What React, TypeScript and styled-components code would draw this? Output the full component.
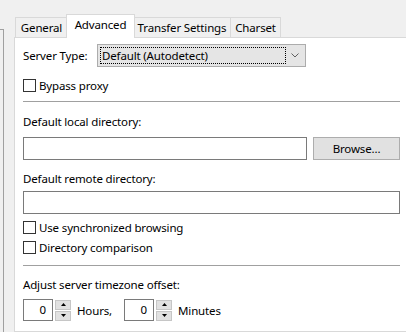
import styled, { createGlobalStyle } from "styled-components";

const GlobalStyle = createGlobalStyle`
  html, body {
    margin: 0;
    padding: 0;
    background: #f0f0f0;
  }
  body {
    font-family: "Noto Sans", "Liberation Sans", sans-serif;
    font-size: 11.5px;
    letter-spacing: -0.15px;
    color: #000;
  }
`;

const Window = styled.div`
  display: flex;
  width: 406px;
  height: 332px;
  overflow: hidden;
  background: #f0f0f0;
`;

// corner of the site tree that sits left of the tabs
const TreeEdge = styled.div`
  flex: none;
  width: 3px;
  margin-top: 29px;
  margin-right: 10px;
  border-top: 1px solid #a0a0a0;
  border-right: 1px solid #a0a0a0;
`;

const TabArea = styled.div`
  flex: none;
  display: flex;
  flex-direction: column;
  width: 420px;
  padding-top: 14px;
`;

const TabStrip = styled.div`
  display: flex;
  align-items: flex-end;
  height: 23px;
  padding-left: 1px;
  position: relative;
  z-index: 1;
`;

const Tab = styled.div<{ $active?: boolean; $w: number }>`
  box-sizing: border-box;
  width: ${(p) => p.$w}px;
  height: ${(p) => (p.$active ? 24 : 20)}px;
  margin-left: ${(p) => (p.$active ? -2 : -1)}px;
  margin-right: ${(p) => (p.$active ? -1 : 0)}px;
  margin-bottom: ${(p) => (p.$active ? -1 : 0)}px;
  border: 1px solid #d9d9d9;
  border-bottom: none;
  background: ${(p) => (p.$active ? "#fff" : "#f0f0f0")};
  position: relative;
  z-index: ${(p) => (p.$active ? 2 : 1)};
  text-align: center;
  line-height: ${(p) => (p.$active ? 20 : 19)}px;
  white-space: nowrap;

  &:first-child {
    margin-left: 0;
  }
`;

const Panel = styled.div`
  flex: 1;
  border: 1px solid #d9d9d9;
  background: #fff;
  padding: 0 8px;
`;

const Content = styled.div`
  width: 377px;
  display: flex;
  flex-direction: column;
`;

const Row = styled.div<{ $mt: number }>`
  display: flex;
  align-items: center;
  margin-top: ${(p) => p.$mt}px;
`;

const Label = styled.div<{ $mt: number }>`
  margin-top: ${(p) => p.$mt}px;
  height: 16px;
  line-height: 16px;
  white-space: nowrap;
`;

const FieldLabel = styled.span<{ $w?: number }>`
  width: ${(p) => (p.$w ? `${p.$w}px` : "auto")};
  flex: none;
  white-space: nowrap;
  line-height: 16px;
`;

const Combo = styled.div`
  box-sizing: border-box;
  width: 209px;
  height: 23px;
  border: 1px solid #acacac;
  background: #e5e5e5;
  display: flex;
  align-items: center;
  padding: 2px;
`;

const ComboText = styled.div`
  box-sizing: border-box;
  flex: 1;
  height: 17px;
  border: 1px dotted #000;
  line-height: 15px;
  padding-left: 1px;
  white-space: nowrap;
`;

const ComboArrow = styled.div`
  width: 17px;
  display: flex;
  justify-content: center;
`;

const CheckRow = styled.label<{ $mt: number }>`
  display: flex;
  align-items: center;
  height: 17px;
  margin-top: ${(p) => p.$mt}px;
  gap: 3px;
`;

const CheckBox = styled.span`
  box-sizing: border-box;
  width: 13px;
  height: 13px;
  border: 1px solid #333;
  background: #fff;
  flex: none;
`;

const Separator = styled.hr<{ $mt: number }>`
  margin: ${(p) => p.$mt}px 0 0;
  border: none;
  height: 1px;
  background: #a0a0a0;
`;

const TextInput = styled.div<{ $w: number }>`
  box-sizing: border-box;
  width: ${(p) => p.$w}px;
  height: 23px;
  border: 1px solid #7a7a7a;
  background: #fff;
`;

const Button = styled.div`
  box-sizing: border-box;
  width: 87px;
  height: 23px;
  margin-left: auto;
  border: 1px solid #adadad;
  background: #e1e1e1;
  display: flex;
  align-items: center;
  justify-content: center;
`;

const SpinGroup = styled.div`
  display: flex;
  align-items: center;
  gap: 2px;
`;

const SpinInput = styled.div`
  box-sizing: border-box;
  width: 30px;
  height: 22px;
  border: 1px solid #7a7a7a;
  background: #fff;
  text-align: right;
  padding-right: 6px;
  line-height: 20px;
`;

const SpinButtons = styled.div`
  display: flex;
  flex-direction: column;
  gap: 1px;
`;

const SpinButton = styled.div`
  box-sizing: border-box;
  width: 16px;
  height: 10px;
  border: 1px solid #c6c6c6;
  background: #e1e1e1;
  display: flex;
  align-items: center;
  justify-content: center;
`;

const UnitLabel = styled.span<{ $mr: number }>`
  margin-left: 6px;
  margin-right: ${(p) => p.$mr}px;
  white-space: nowrap;
`;

const Triangle = ({ down }: { down?: boolean }) => (
  <svg width="5" height="3" viewBox="0 0 5 3">
    <path d={down ? "M0 0H5L2.5 3Z" : "M0 3H5L2.5 0Z"} fill="#000" />
  </svg>
);

function Spinner({ value, unit, gapAfter }: { value: string; unit: string; gapAfter: number }) {
  return (
    <>
      <SpinGroup>
        <SpinInput>{value}</SpinInput>
        <SpinButtons>
          <SpinButton>
            <Triangle />
          </SpinButton>
          <SpinButton>
            <Triangle down />
          </SpinButton>
        </SpinButtons>
      </SpinGroup>
      <UnitLabel $mr={gapAfter}>{unit}</UnitLabel>
    </>
  );
}

const tabs = [
  { name: "General", w: 53 },
  { name: "Advanced", w: 69, active: true },
  { name: "Transfer Settings", w: 98 },
  { name: "Charset", w: 51 },
];

export default function App() {
  return (
    <>
      <GlobalStyle />
      <Window>
        <TreeEdge />
        <TabArea>
          <TabStrip>
            {tabs.map((t) => (
              <Tab key={t.name} $w={t.w} $active={t.active}>
                {t.name}
              </Tab>
            ))}
          </TabStrip>
          <Panel>
            <Content>
              <Row $mt={6}>
                <FieldLabel $w={74}>Server Type:</FieldLabel>
                <Combo>
                  <ComboText>Default (Autodetect)</ComboText>
                  <ComboArrow>
                    <svg width="8" height="5" viewBox="0 0 8 5">
                      <path d="M0.5 0.5L4 4L7.5 0.5" fill="none" stroke="#606060" strokeWidth="1" />
                    </svg>
                  </ComboArrow>
                </Combo>
              </Row>
              <CheckRow $mt={10}>
                <CheckBox />
                Bypass proxy
              </CheckRow>
              <Separator $mt={7} />
              <Label $mt={12}>Default local directory:</Label>
              <Row $mt={7}>
                <TextInput $w={284} />
                <Button>Browse...</Button>
              </Row>
              <Label $mt={11}>Default remote directory:</Label>
              <Row $mt={4}>
                <TextInput $w={377} />
              </Row>
              <CheckRow $mt={5}>
                <CheckBox />
                Use synchronized browsing
              </CheckRow>
              <CheckRow $mt={3}>
                <CheckBox />
                Directory comparison
              </CheckRow>
              <Separator $mt={9} />
              <Label $mt={11}>Adjust server timezone offset:</Label>
              <Row $mt={6}>
                <Spinner value="0" unit="Hours," gapAfter={12} />
                <Spinner value="0" unit="Minutes" gapAfter={0} />
              </Row>
            </Content>
          </Panel>
        </TabArea>
      </Window>
    </>
  );
}
